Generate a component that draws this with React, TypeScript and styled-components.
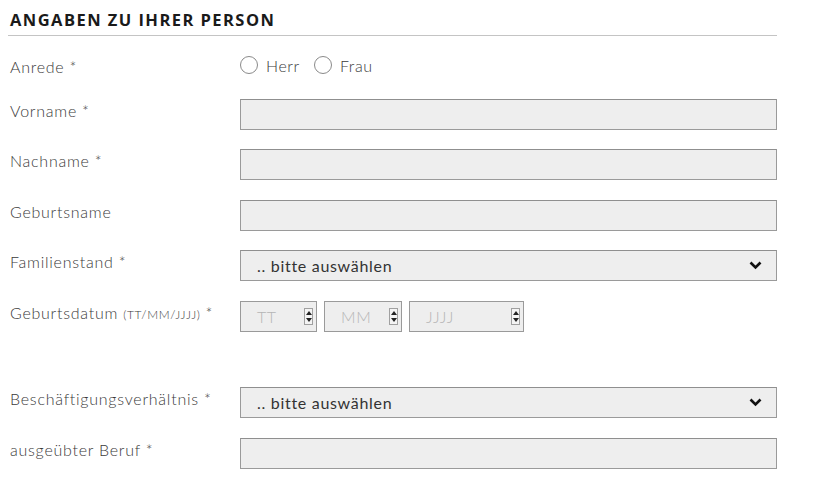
import React from "react";
import styled, { createGlobalStyle } from "styled-components";

const Global = createGlobalStyle`
  html, body { margin: 0; padding: 0; background: #fff; }
  body { padding: 0 8px; font-family: "Lato", "Open Sans", sans-serif; }
`;

const Form = styled.div`
  width: 769px;
`;

const Heading = styled.h2`
  margin: 0;
  padding: 10px 0 6px 2px;
  font-family: "Open Sans", "Lato", sans-serif;
  font-weight: 700;
  font-size: 16.5px;
  line-height: 19px;
  letter-spacing: 1.45px;
  color: #1a1a1a;
  border-bottom: 1px solid #c4c4c4;
`;

const Row = styled.div<{ $mb: number; $mt?: number }>`
  display: grid;
  grid-template-columns: 230px 537px;
  align-items: start;
  padding-left: 2px;
  margin-top: ${(p) => p.$mt ?? 0}px;
  margin-bottom: ${(p) => p.$mb}px;
`;

const Label = styled.label`
  font-family: "Lato", sans-serif;
  font-weight: 300;
  font-size: 16px;
  line-height: 20px;
  letter-spacing: 0.75px;
  color: #3a3a3a;
  padding-top: 2px;
`;

const Small = styled.span`
  font-size: 12px;
  letter-spacing: 0.6px;
`;

const TextInput = styled.div`
  box-sizing: border-box;
  height: 31px;
  width: 537px;
  background: #eeeeee;
  border: 1px solid #9a9a9a;
  border-top-color: #8f8f8f;
`;

const Select = styled(TextInput)`
  display: flex;
  align-items: center;
  justify-content: space-between;
  padding: 0 14px 0 16px;
  font-family: "Lato", sans-serif;
  font-weight: 400;
  font-size: 16px;
  letter-spacing: 0.7px;
  color: #333;
`;

const RadioGroup = styled.div`
  display: flex;
  align-items: center;
  gap: 8px;
  height: 20px;
`;

const RadioItem = styled.div`
  display: flex;
  align-items: center;
  gap: 8px;
  margin-right: 6px;
  font-family: "Lato", sans-serif;
  font-weight: 300;
  font-size: 16px;
  letter-spacing: 0.6px;
  color: #3a3a3a;
`;

const RadioCircle = styled.span`
  box-sizing: border-box;
  width: 18px;
  height: 18px;
  border-radius: 50%;
  border: 1.5px solid #8a8a8a;
  background: #fff;
`;

const DateGroup = styled.div`
  display: flex;
  gap: 7px;
`;

const DateBox = styled.div<{ $w: number }>`
  box-sizing: border-box;
  width: ${(p) => p.$w}px;
  height: 31px;
  background: #eeeeee;
  border: 1px solid #9a9a9a;
  display: flex;
  align-items: center;
  justify-content: space-between;
  padding: 0 3px 0 16px;
  font-family: "Lato", sans-serif;
  font-weight: 300;
  font-size: 16px;
  letter-spacing: 0.6px;
  color: #b5b5b5;
`;

const Spinner = styled.div`
  box-sizing: border-box;
  width: 9px;
  height: 17px;
  border: 1px solid #a0a0a0;
  background: #f4f4f4;
  display: flex;
  flex-direction: column;
  align-items: center;
  justify-content: space-around;
`;

const Tri = styled.span<{ $up?: boolean }>`
  width: 0;
  height: 0;
  border-left: 3px solid transparent;
  border-right: 3px solid transparent;
  ${(p) => (p.$up ? "border-bottom: 4px solid #222;" : "border-top: 4px solid #222;")}
`;

const Chevron = () => (
  <svg width="13" height="9" viewBox="0 0 13 9">
    <path d="M1.5 1.5 L6.5 6.5 L11.5 1.5" fill="none" stroke="#111" strokeWidth="2.6" />
  </svg>
);

const DateField = ({ w, ph }: { w: number; ph: string }) => (
  <DateBox $w={w}>
    <span>{ph}</span>
    <Spinner>
      <Tri $up />
      <Tri />
    </Spinner>
  </DateBox>
);

export default function App() {
  return (
    <>
      <Global />
      <Form>
        <Heading>ANGABEN ZU IHRER PERSON</Heading>
        <Row $mt={19} $mb={22}>
          <Label>Anrede *</Label>
          <RadioGroup>
            <RadioItem>
              <RadioCircle />
              Herr
            </RadioItem>
            <RadioItem>
              <RadioCircle />
              Frau
            </RadioItem>
          </RadioGroup>
        </Row>
        <Row $mb={19}>
          <Label>Vorname *</Label>
          <TextInput />
        </Row>
        <Row $mb={20}>
          <Label>Nachname *</Label>
          <TextInput />
        </Row>
        <Row $mb={19}>
          <Label>Geburtsname</Label>
          <TextInput />
        </Row>
        <Row $mb={20}>
          <Label>Familienstand *</Label>
          <Select>
            <span>.. bitte auswählen</span>
            <Chevron />
          </Select>
        </Row>
        <Row $mb={55}>
          <Label>
            Geburtsdatum <Small>(TT/MM/JJJJ)</Small> *
          </Label>
          <DateGroup>
            <DateField w={77} ph="TT" />
            <DateField w={78} ph="MM" />
            <DateField w={115} ph="JJJJ" />
          </DateGroup>
        </Row>
        <Row $mb={20}>
          <Label>Beschäftigungsverhältnis *</Label>
          <Select>
            <span>.. bitte auswählen</span>
            <Chevron />
          </Select>
        </Row>
        <Row $mb={20}>
          <Label>ausgeübter Beruf *</Label>
          <TextInput />
        </Row>
      </Form>
    </>
  );
}
